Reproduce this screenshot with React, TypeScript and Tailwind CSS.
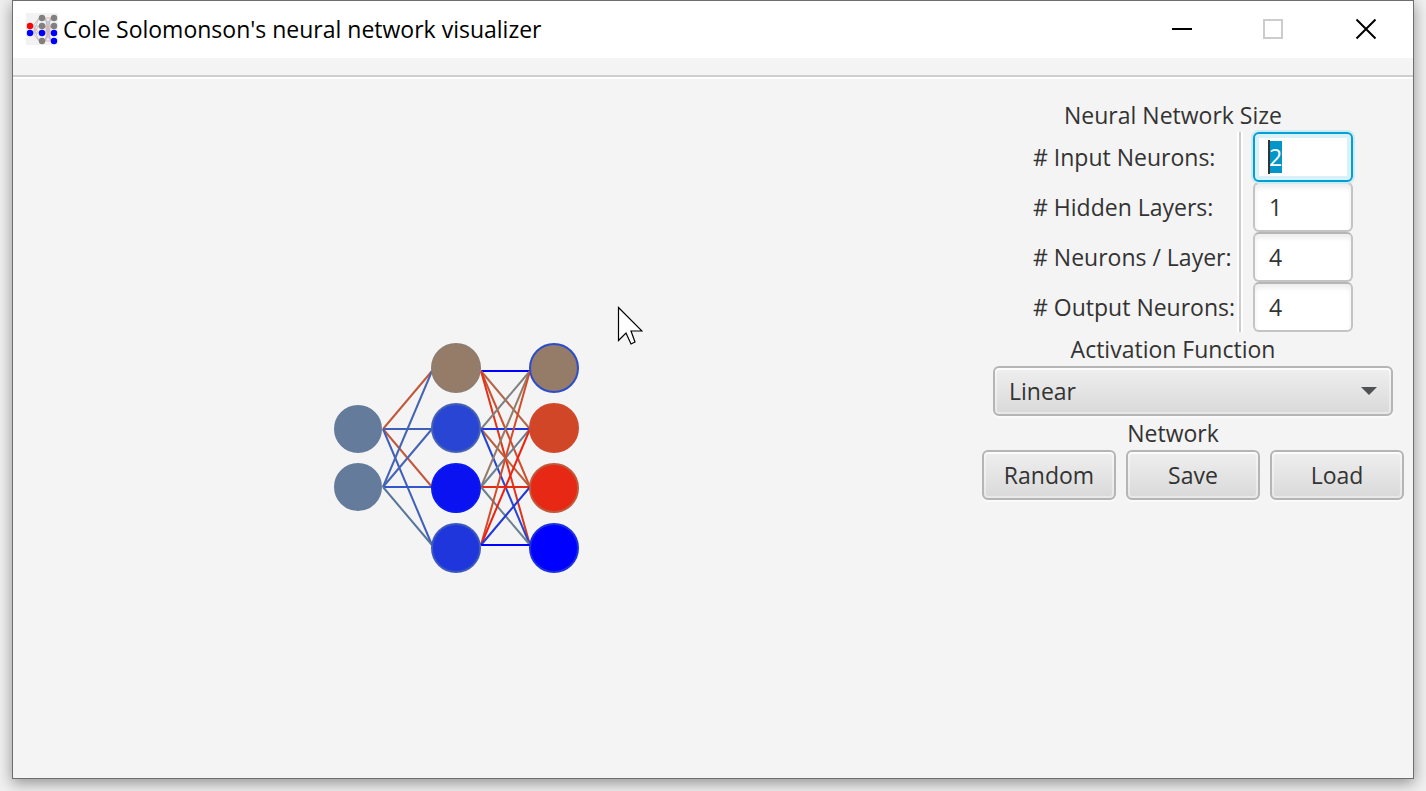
import { useEffect, useRef } from "react";

type Node = { x: number; y: number; r: number; fill: string; stroke: string };
type Edge = { from: [number, number]; to: [number, number]; color: string };

const rows = [28, 86, 144, 202];

const nodes: Node[] = [
  { x: 25, y: 86, r: 23, fill: "#647b9b", stroke: "#647b9b" },
  { x: 25, y: 144, r: 23, fill: "#647b9b", stroke: "#647b9b" },
  { x: 123, y: 25, r: 24, fill: "#957c68", stroke: "#8f7c6e" },
  { x: 123, y: 85, r: 24, fill: "#2945d4", stroke: "#4461b4" },
  { x: 123, y: 145, r: 24, fill: "#0a12f2", stroke: "#0a1af0" },
  { x: 123, y: 205, r: 24, fill: "#1e36dc", stroke: "#3a58be" },
  { x: 221, y: 25, r: 24, fill: "#957c68", stroke: "#2c4ccb" },
  { x: 221, y: 85, r: 24, fill: "#d04627", stroke: "#cf4a2c" },
  { x: 221, y: 145, r: 24, fill: "#e62814", stroke: "#c2583a" },
  { x: 221, y: 205, r: 24, fill: "#0000ff", stroke: "#1a30e0" },
];

const inputColors = [
  ["#c2583a", "#3e5fba", "#c2583a", "#3e5fba"],
  ["#4665b0", "#4463b4", "#3358cc", "#587699"],
];

const outputColors = [
  ["#0000ff", "#b2654a", "#cc5030", "#e0341a"],
  ["#808080", "#1d33e0", "#b8603e", "#2545d5"],
  ["#957c68", "#6b7f90", "#e42a16", "#6b7f90"],
  ["#d24c2c", "#f02010", "#2038d8", "#0000ff"],
];

const edges: Edge[] = [
  ...inputColors.flatMap((colors, i) =>
    colors.map((color, j): Edge => ({ from: [50, rows[i + 1]], to: [99, rows[j]], color })),
  ),
  ...outputColors.flatMap((colors, i) =>
    colors.map((color, j): Edge => ({ from: [148, rows[i]], to: [197, rows[j]], color })),
  ),
];

const fields = [
  { id: "inputs", label: "# Input Neurons:", value: "2" },
  { id: "layers", label: "# Hidden Layers:", value: "1" },
  { id: "neurons", label: "# Neurons / Layer:", value: "4" },
  { id: "outputs", label: "# Output Neurons:", value: "4" },
];

function AppIcon() {
  const columns = [
    { x: 4, dots: [["#ff0000", 13], ["#0000ff", 20]] },
    { x: 16, dots: [["#808080", 5], ["#808080", 13], ["#0000ff", 20], ["#808080", 28]] },
    { x: 28, dots: [["#808080", 5], ["#808080", 13], ["#0000ff", 20], ["#0000ff", 28]] },
  ] as { x: number; dots: [string, number][] }[];
  return (
    <svg viewBox="0 0 32 32" className="h-8 w-8 shrink-0 bg-[#f2f2f2]" aria-hidden="true">
      {columns.slice(0, 2).map((column, c) =>
        column.dots.flatMap(([, y1], i) =>
          columns[c + 1].dots.map(([, y2], j) => (
            <line
              key={`${c}-${i}-${j}`}
              x1={column.x + 3}
              y1={y1}
              x2={columns[c + 1].x - 3}
              y2={y2}
              stroke={(i + j) % 2 ? "#a9bfe0" : "#e8a58e"}
              strokeWidth="0.8"
            />
          )),
        ),
      )}
      {columns.map((column) =>
        column.dots.map(([fill, y]) => <circle key={`${column.x}-${y}`} cx={column.x} cy={y} r="3.2" fill={fill} />),
      )}
    </svg>
  );
}

function TitleBar() {
  return (
    <header className="flex h-[57px] items-start bg-white pt-3 pr-9 pl-[13px]">
      <AppIcon />
      <h1 className="ml-[5px] flex-1 text-[23px] leading-8 whitespace-nowrap text-black">
        Cole Solomonson's neural network visualizer
      </h1>
      <div className="flex gap-[70px] pt-[5px]">
        <button type="button" aria-label="Minimize" className="h-[22px] w-[22px]">
          <svg viewBox="0 0 22 22" className="h-full w-full">
            <path d="M1 11H21" stroke="#000" strokeWidth="2" />
          </svg>
        </button>
        <button type="button" aria-label="Maximize" disabled className="h-[22px] w-[22px]">
          <svg viewBox="0 0 22 22" className="h-full w-full">
            <rect x="1" y="2" width="18" height="18" fill="none" stroke="#cccccc" strokeWidth="2" />
          </svg>
        </button>
        <button type="button" aria-label="Close" className="h-[22px] w-[22px]">
          <svg viewBox="0 0 22 22" className="h-full w-full">
            <path d="M1.5 1.5L20.5 20.5M20.5 1.5L1.5 20.5" stroke="#000" strokeWidth="2" />
          </svg>
        </button>
      </div>
    </header>
  );
}

function NetworkDiagram() {
  return (
    <svg viewBox="0 0 247 230" className="h-[230px] w-[247px]" role="img" aria-label="Neural network">
      {edges.map((e, i) => (
        <line key={i} x1={e.from[0]} y1={e.from[1]} x2={e.to[0]} y2={e.to[1]} stroke={e.color} strokeWidth="2" />
      ))}
      {nodes.map((n, i) => (
        <circle key={i} cx={n.x} cy={n.y} r={n.r} fill={n.fill} stroke={n.stroke} strokeWidth="2" />
      ))}
    </svg>
  );
}

function SizeFields() {
  const first = useRef<HTMLInputElement>(null);
  useEffect(() => {
    first.current?.focus();
    first.current?.select();
  }, []);
  return (
    <div className="flex w-80">
      <div className="flex flex-1 flex-col">
        {fields.map((f) => (
          <label key={f.id} htmlFor={f.id} className="h-[50px] leading-[50px] whitespace-nowrap">
            {f.label}
          </label>
        ))}
      </div>
      <div className="mr-[10px] w-[6px] border-x-2 border-white bg-[#cccccc]" />
      <div className="flex w-[100px] flex-col">
        {fields.map((f, i) => (
          <div key={f.id} className="relative h-[50px]">
            <input
              id={f.id}
              ref={i === 0 ? first : undefined}
              type="text"
              defaultValue={f.value}
              className="relative h-[50px] w-full rounded-md border-2 border-[#c4c4c4] border-t-[#b6b6b6] bg-white px-[14px] leading-[34px] shadow-[inset_0_4px_5px_#eeeeee] outline-none selection:bg-[#0096c9] selection:text-white focus:z-10 focus:border-[#039ed3] focus:shadow-[0_0_0_2px_#cdebf3,inset_0_0_0_4px_#d9f1f8]"
            />
            {i === 0 && <span className="absolute top-2 left-[15px] z-20 h-[34px] w-[2px] bg-[#333333]" />}
          </div>
        ))}
      </div>
    </div>
  );
}

const raised =
  "h-[50px] rounded-md border-2 border-[#b5b5b5] bg-linear-to-b from-[#efefef] to-[#d9d9d9] shadow-[inset_0_0_0_2px_rgba(255,255,255,0.4),inset_0_2px_0_#fafafa,0_2px_0_#fafafa]";

function Sidebar() {
  return (
    <aside className="flex shrink-0 flex-col items-center pt-[19px] pr-[9px]">
      <h2 className="mr-10 h-[34px] leading-[34px]">Neural Network Size</h2>
      <SizeFields />
      <label htmlFor="activation" className="mr-10 h-[34px] leading-[34px]">
        Activation Function
      </label>
      <div className="relative w-[400px]">
        <select id="activation" defaultValue="Linear" className={`${raised} w-full appearance-none px-[14px]`}>
          <option>Linear</option>
        </select>
        <svg viewBox="0 0 16 8" className="pointer-events-none absolute top-[21px] right-4 h-2 w-4" aria-hidden="true">
          <path d="M0 0H16L8 8Z" fill="#505153" />
        </svg>
      </div>
      <h2 className="mr-10 h-[34px] leading-[34px]">Network</h2>
      <div className="grid grid-cols-3 gap-[10px]">
        {["Random", "Save", "Load"].map((name) => (
          <button key={name} type="button" className={`${raised} w-[134px]`}>
            {name}
          </button>
        ))}
      </div>
    </aside>
  );
}

export default function App() {
  return (
    <div className="flex min-h-screen flex-col overflow-hidden bg-[#f0f0f0] px-3 pb-3 font-['Open_Sans',sans-serif]">
      <div className="flex flex-1 flex-col border border-[#6e6e6e] bg-[#f4f4f4] text-[23px] text-[#333333] shadow-[0_4px_14px_rgba(0,0,0,0.4)]">
        <TitleBar />
        <div className="h-[21px] border-b-2 border-white">
          <div className="h-[19px] border-b-2 border-[#cfcfcf]" />
        </div>
        <main className="relative flex flex-1">
          <section className="flex-1 pt-66 pl-80">
            <NetworkDiagram />
          </section>
          <Sidebar />
          <svg
            viewBox="0 0 26 40"
            className="pointer-events-none absolute top-[227px] left-[604px] h-10 w-[26px]"
            aria-hidden="true"
          >
            <path
              d="M1.5 1.5V34.5L9 27L14 38L18 36L14 25H25Z"
              fill="#fff"
              stroke="#000"
              strokeWidth="1.2"
            />
          </svg>
        </main>
      </div>
    </div>
  );
}
